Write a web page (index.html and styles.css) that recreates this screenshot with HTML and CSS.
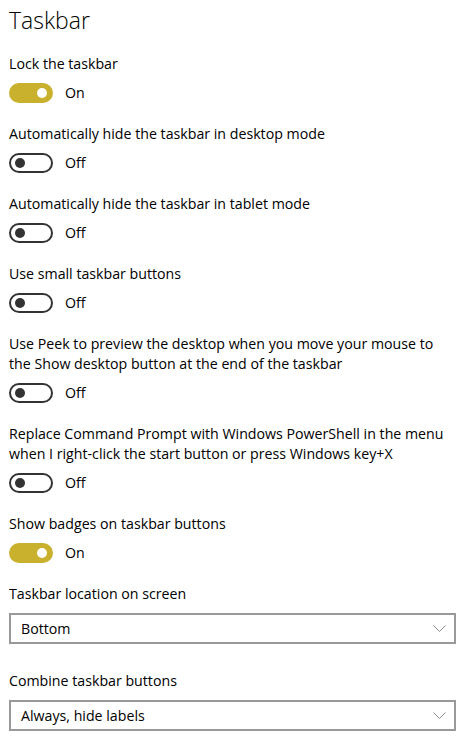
FILE: index.html
```html
<!DOCTYPE html>
<html lang="en">
<head>
    <meta charset="UTF-8">
    <title>Taskbar</title>
    <link rel="stylesheet" href="styles.css">
</head>
<body>

<div class="page">
    <h1>Taskbar</h1>

    <div class="setting">
        <div class="label">Lock the taskbar</div>
        <div class="toggle-row">
            <span class="toggle on"></span>
            <span class="state">On</span>
        </div>
    </div>

    <div class="setting">
        <div class="label">Automatically hide the taskbar in desktop mode</div>
        <div class="toggle-row">
            <span class="toggle"></span>
            <span class="state">Off</span>
        </div>
    </div>

    <div class="setting">
        <div class="label">Automatically hide the taskbar in tablet mode</div>
        <div class="toggle-row">
            <span class="toggle"></span>
            <span class="state">Off</span>
        </div>
    </div>

    <div class="setting">
        <div class="label">Use small taskbar buttons</div>
        <div class="toggle-row">
            <span class="toggle"></span>
            <span class="state">Off</span>
        </div>
    </div>

    <div class="setting">
        <div class="label">Use Peek to preview the desktop when you move your mouse to the Show desktop button at the end of the taskbar</div>
        <div class="toggle-row">
            <span class="toggle"></span>
            <span class="state">Off</span>
        </div>
    </div>

    <div class="setting">
        <div class="label">Replace Command Prompt with Windows PowerShell in the menu when I right-click the start button or press Windows key+X</div>
        <div class="toggle-row">
            <span class="toggle"></span>
            <span class="state">Off</span>
        </div>
    </div>

    <div class="setting">
        <div class="label">Show badges on taskbar buttons</div>
        <div class="toggle-row">
            <span class="toggle on"></span>
            <span class="state">On</span>
        </div>
    </div>

    <div class="setting select-setting">
        <div class="label">Taskbar location on screen</div>
        <div class="dropdown">
            <span>Bottom</span>
            <svg class="chevron" width="13" height="7" viewBox="0 0 13 7"><path d="M0.5 0.5 L6.5 6.5 L12.5 0.5" fill="none" stroke="#8a8a8a" stroke-width="1"/></svg>
        </div>
    </div>

    <div class="setting select-setting">
        <div class="label">Combine taskbar buttons</div>
        <div class="dropdown">
            <span>Always, hide labels</span>
            <svg class="chevron" width="13" height="7" viewBox="0 0 13 7"><path d="M0.5 0.5 L6.5 6.5 L12.5 0.5" fill="none" stroke="#8a8a8a" stroke-width="1"/></svg>
        </div>
    </div>
</div>

</body>
</html>
```

FILE: styles.css
```css
body {
    margin: 0;
    background-color: #fff;
    color: #000;
    font-family: "Open Sans", "Noto Sans", sans-serif;
    font-size: 14.2px;
}

.page {
    padding: 0 17px 0 9px;
}

h1 {
    font-size: 23px;
    font-weight: 300;
    line-height: 32px;
    margin: 4px 0 18px;
}

.setting {
    margin-bottom: 21px;
}

.label {
    line-height: 20px;
    margin-bottom: 9px;
}

.toggle-row {
    display: flex;
    align-items: center;
    gap: 12px;
    height: 20px;
}

.toggle {
    position: relative;
    box-sizing: border-box;
    width: 44px;
    height: 20px;
    border: 2px solid #333;
    border-radius: 10px;
}

.toggle::after {
    content: "";
    position: absolute;
    top: 3px;
    left: 4px;
    width: 10px;
    height: 10px;
    border-radius: 50%;
    background-color: #333;
}

.toggle.on {
    background-color: #c9b12e;
    border-color: #c9b12e;
}

.toggle.on::after {
    left: auto;
    right: 4px;
    background-color: #fff;
}

.state {
    line-height: 20px;
}

.select-setting {
    margin-bottom: 27px;
}

.select-setting .label {
    margin-bottom: 9px;
}

.dropdown {
    display: flex;
    align-items: center;
    justify-content: space-between;
    box-sizing: border-box;
    height: 31px;
    border: 2px solid #999;
    padding: 0 8px 0 10px;
}
```
